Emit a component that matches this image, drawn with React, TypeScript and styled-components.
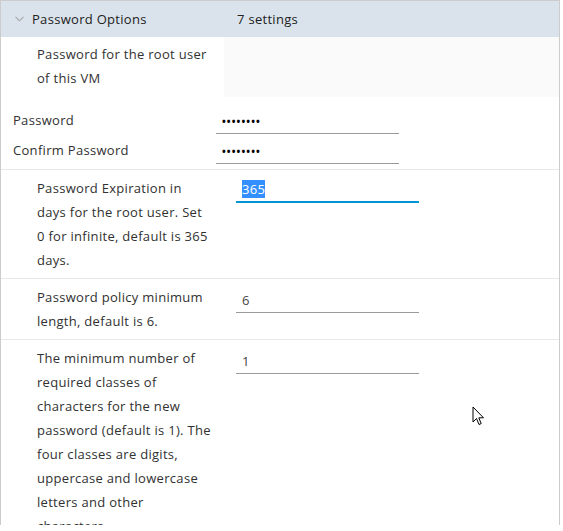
import { createGlobalStyle } from 'styled-components'
import styled from 'styled-components'

const GlobalStyle = createGlobalStyle`
  html, body {
    margin: 0;
    padding: 0;
    background: #fff;
  }
  body {
    font-family: 'Open Sans', 'Noto Sans', sans-serif;
    font-size: 13px;
    letter-spacing: 0.3px;
    color: #313131;
  }
  input::selection {
    background: #338fff;
    color: #fff;
  }
`

const Frame = styled.div`
  position: relative;
  width: 560px;
  height: 525px;
  box-sizing: border-box;
  border: 1px solid #cccccc;
  border-bottom: none;
  overflow: hidden;
`

const GroupHeader = styled.div`
  display: flex;
  align-items: center;
  height: 36px;
  background: #dae3eb;
  color: #222;
`

const Chevron = styled.span`
  display: flex;
  width: 31px;
  justify-content: flex-end;
  padding-right: 8px;
  box-sizing: border-box;
`

const GroupTitle = styled.div`
  width: 205px;
`

const SubRow = styled.div<{ $divider?: boolean }>`
  display: flex;
  align-items: flex-start;
  padding: 6px 0 6px 36px;
  border-top: ${(p) => (p.$divider ? '1px solid #e8e8e8' : 'none')};
`

const Description = styled.div`
  width: 175px;
  margin-right: 24px;
  line-height: 24px;
`

const IntroRow = styled.div`
  display: flex;
  height: 60px;
`

const IntroText = styled.div`
  width: 175px;
  padding: 5px 12px 0 36px;
  line-height: 24px;
`

const IntroFill = styled.div`
  flex: 1;
  background: #fafafa;
`

const PasswordBlock = styled.div`
  display: flex;
  flex-direction: column;
  padding: 8px 0 4px 12px;
`

const FieldRow = styled.div`
  display: flex;
  align-items: center;
  height: 30px;
`

const FieldLabel = styled.label`
  width: 203px;
`

const TextInput = styled.input<{ $focused?: boolean }>`
  width: 183px;
  height: 26px;
  box-sizing: border-box;
  padding: 0 6px;
  margin-top: ${(p) => (p.$focused ? '1px' : '2px')};
  border: none;
  border-bottom: ${(p) => (p.$focused ? '2px solid #0095d3' : '1px solid #9a9a9a')};
  outline: none;
  background: transparent;
  font-family: inherit;
  font-size: 13px;
  letter-spacing: 0.3px;
  color: #444;
`

const PasswordInput = styled(TextInput)`
  margin-top: 2px;
  font-size: 10px;
  letter-spacing: 1.1px;
  font-weight: 700;
  color: #000;
`

const Pointer = styled.svg`
  position: absolute;
  left: 471px;
  top: 405px;
`

const rows = [
  {
    text: 'Password Expiration in days for the root user. Set 0 for infinite, default is 365 days.',
    value: '365',
    focused: true
  },
  { text: 'Password policy minimum length, default is 6.', value: '6' },
  {
    text: 'The minimum number of required classes of characters for the new password (default is 1). The four classes are digits, uppercase and lowercase letters and other characters.',
    value: '1'
  }
]

const App = () => {
  return (
    <>
      <GlobalStyle />
      <Frame>
        <GroupHeader>
          <Chevron>
            <svg width="9" height="6" viewBox="0 0 9 6">
              <path d="M0.5 0.8 L4.5 4.8 L8.5 0.8" fill="none" stroke="#a8a8a8" strokeWidth="1.1" />
            </svg>
          </Chevron>
          <GroupTitle>Password Options</GroupTitle>
          <div>7 settings</div>
        </GroupHeader>

        <IntroRow>
          <IntroText>Password for the root user of this VM</IntroText>
          <IntroFill />
        </IntroRow>

        <PasswordBlock>
          <FieldRow>
            <FieldLabel>Password</FieldLabel>
            <PasswordInput type="text" defaultValue="••••••••" readOnly />
          </FieldRow>
          <FieldRow>
            <FieldLabel>Confirm Password</FieldLabel>
            <PasswordInput type="text" defaultValue="••••••••" readOnly />
          </FieldRow>
        </PasswordBlock>

        {rows.map((row) => (
          <SubRow key={row.value} $divider>
            <Description>{row.text}</Description>
            <TextInput
              $focused={row.focused}
              defaultValue={row.value}
              ref={
                row.focused
                  ? (el) => {
                      if (el) {
                        el.focus()
                        el.select()
                      }
                    }
                  : undefined
              }
            />
          </SubRow>
        ))}

        <Pointer width="14" height="22" viewBox="0 0 14 22">
          <path
            d="M1 1 L1 16 L4.5 12.5 L7 18.5 L9.2 17.6 L6.8 11.8 L11.5 11.8 Z"
            fill="#fff"
            stroke="#000"
            strokeWidth="1"
            strokeLinejoin="miter"
          />
        </Pointer>
      </Frame>
    </>
  )
}

export default App
